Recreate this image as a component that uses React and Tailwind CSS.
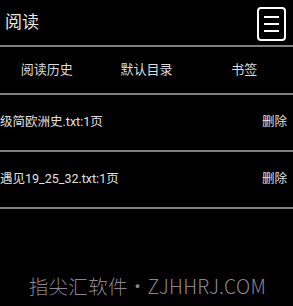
export default function App() {
  const cjk = { fontFamily: 'Roboto, "Noto Sans CJK SC", sans-serif' };
  const wm = { fontFamily: '"Noto Sans CJK SC", "Open Sans", sans-serif' };
  return (
    <div className="w-[293px] h-[306px] bg-black overflow-hidden flex flex-col text-white" style={cjk}>
      <div className="h-[45px] flex items-center justify-between pl-[5px] pr-[7px]">
        <span className="text-[17px] leading-none text-[#e8e8e8]">阅读</span>
        <div className="w-[29px] h-[34px] mt-[2px] border-2 border-white rounded-[4px] flex flex-col items-center justify-center gap-[5px]">
          <div className="w-[15px] h-[2px] bg-white"></div>
          <div className="w-[15px] h-[2px] bg-white"></div>
          <div className="w-[15px] h-[2px] bg-white"></div>
        </div>
      </div>
      <div className="h-[2px] bg-[#808080]"></div>
      <div className="h-[46px] grid grid-cols-3 items-center text-[13px] text-[#dcdcdc]">
        <div className="text-center pr-[4px]">阅读历史</div>
        <div className="text-center">默认目录</div>
        <div className="text-center">书签</div>
      </div>
      <div className="h-[2px] bg-[#808080]"></div>
      <div className="h-[55px] flex items-center justify-between pr-[6px] text-[12.5px] text-[#e0e0e0] overflow-hidden">
        <span className="whitespace-nowrap">级简欧洲史.txt:1页</span>
        <span>删除</span>
      </div>
      <div className="h-[2px] bg-[#808080]"></div>
      <div className="h-[55px] flex items-center justify-between pr-[6px] text-[12.5px] text-[#e0e0e0] overflow-hidden">
        <span className="whitespace-nowrap">遇见19_25_32.txt:1页</span>
        <span>删除</span>
      </div>
      <div className="h-[2px] bg-[#808080]"></div>
      <div className="flex-1 flex items-end justify-center pb-[11px] pl-[2px]">
        <span className="text-[19.5px] leading-none text-[#8e8592] font-light tracking-[0.3px]" style={wm}>指尖汇软件・ZJHHRJ.COM</span>
      </div>
    </div>
  );
}
